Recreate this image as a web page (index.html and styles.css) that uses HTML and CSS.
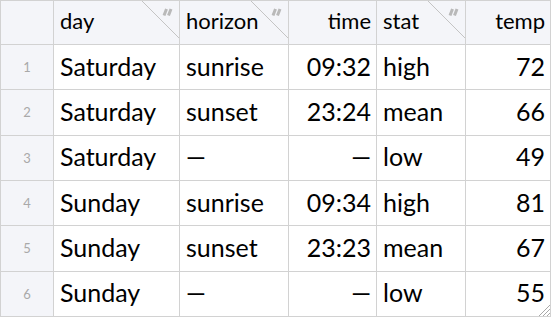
FILE: index.html
```html
<!DOCTYPE html>
<html>
<head>
<meta charset="utf-8">
<link rel="stylesheet" href="styles.css">
</head>
<body>
<div class="sheet">
  <div class="grid">
    <div class="cell head corner"></div>
    <div class="cell head left">day<svg class="sortmark" viewBox="0 0 37 37"><line x1="0" y1="0" x2="37" y2="37"/><path class="tick" d="M24.5 8 L22 14.5 M29 8 L26.5 14.5"/></svg></div>
    <div class="cell head left">horizon<svg class="sortmark" viewBox="0 0 37 37"><line x1="0" y1="0" x2="37" y2="37"/><path class="tick" d="M24.5 8 L22 14.5 M29 8 L26.5 14.5"/></svg></div>
    <div class="cell head right">time</div>
    <div class="cell head left">stat<svg class="sortmark" viewBox="0 0 37 37"><line x1="0" y1="0" x2="37" y2="37"/><path class="tick" d="M24.5 8 L22 14.5 M29 8 L26.5 14.5"/></svg></div>
    <div class="cell head right">temp</div>

    <div class="cell num">1</div><div class="cell left">Saturday</div><div class="cell left">sunrise</div><div class="cell right">09:32</div><div class="cell left">high</div><div class="cell right">72</div>
    <div class="cell num">2</div><div class="cell left">Saturday</div><div class="cell left">sunset</div><div class="cell right">23:24</div><div class="cell left">mean</div><div class="cell right">66</div>
    <div class="cell num">3</div><div class="cell left">Saturday</div><div class="cell left">—</div><div class="cell right">—</div><div class="cell left">low</div><div class="cell right">49</div>
    <div class="cell num">4</div><div class="cell left">Sunday</div><div class="cell left">sunrise</div><div class="cell right">09:34</div><div class="cell left">high</div><div class="cell right">81</div>
    <div class="cell num">5</div><div class="cell left">Sunday</div><div class="cell left">sunset</div><div class="cell right">23:23</div><div class="cell left">mean</div><div class="cell right">67</div>
    <div class="cell num">6</div><div class="cell left">Sunday</div><div class="cell left">—</div><div class="cell right">—</div><div class="cell left">low</div><div class="cell right">55</div>
  </div>
  <svg class="grip" viewBox="0 0 14 14"><path d="M13 2 L2 13 M13 6 L6 13 M13 10 L10 13"/></svg>
</div>
</body>
</html>
```
FILE: styles.css
```css
html, body {
  margin: 0;
  padding: 0;
  background: #ffffff;
}
.sheet {
  position: relative;
  width: 551px;
}
.grid {
  display: grid;
  grid-template-columns: 53px 126px 109px 88px 89px 85px;
  grid-template-rows: 44px repeat(6, 45.333px);
  border-left: 1px solid #d2d2d2;
  border-top: 1px solid #d2d2d2;
  font-family: Lato, "Open Sans", sans-serif;
  color: #000;
}
.cell {
  position: relative;
  display: flex;
  align-items: center;
  border-right: 1px solid #d2d2d2;
  border-bottom: 1px solid #d2d2d2;
  font-size: 25px;
  padding: 0 5px 3px 6px;
  white-space: nowrap;
  overflow: hidden;
}
.left { justify-content: flex-start; }
.right { justify-content: flex-end; }
.head {
  background: #f4f5f9;
  font-size: 22px;
  padding-bottom: 4px;
}
.num {
  background: #f4f5f9;
  justify-content: center;
  font-size: 13px;
  color: #a9a9a9;
  padding: 0;
}
.sortmark {
  position: absolute;
  top: 0;
  right: 0;
  width: 37px;
  height: 37px;
}
.sortmark line {
  stroke: #c4c4c4;
  stroke-width: 1;
}
.sortmark .tick {
  stroke: #b9b9b9;
  stroke-width: 3;
  fill: none;
}
.grip {
  position: absolute;
  right: 0;
  bottom: 0;
  width: 14px;
  height: 14px;
}
.grip path {
  stroke: #a8a8a8;
  stroke-width: 1;
  fill: none;
}
```
